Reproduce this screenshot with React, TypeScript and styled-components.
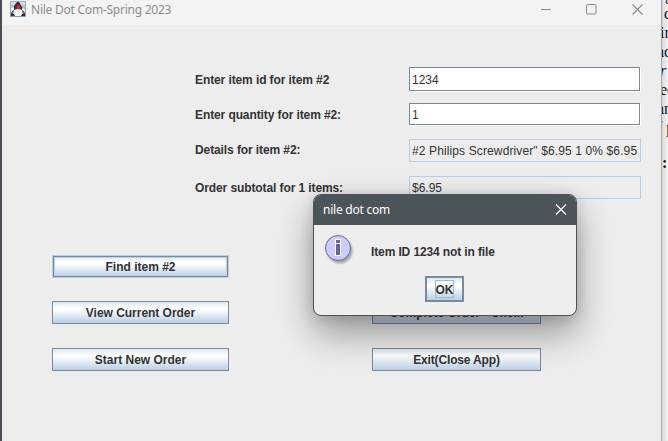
import React from "react";
import styled, { createGlobalStyle, css } from "styled-components";

const Global = createGlobalStyle`
  * { box-sizing: border-box; }
  html, body { margin: 0; overflow: hidden; }
  body { font-family: "Liberation Sans", Arial, sans-serif; font-size: 12px; color: #333; }
`;

const Desktop = styled.main`
  position: relative;
  display: flex;
  width: 668px;
  height: 441px;
  overflow: hidden;
  background: #f0f0f0;
`;
const LeftEdge = styled.div`
  width: 2px;
  background: #4a4d54;
`;
const AppWindow = styled.section`
  width: 660px;
  display: flex;
  flex-direction: column;
  background: #ededed;
  border-right: 1px solid #a9a9a9;
`;
const TitleBar = styled.header`
  height: 25px;
  display: flex;
  align-items: flex-start;
  padding: 1px 18px 0 8px;
  background: #f3f3f3;
  color: #8d8d8d;
`;
const WindowTitle = styled.h1`
  flex: 1;
  margin: 0 0 0 5px;
  font: 400 12px/17px "Noto Sans", "Open Sans", sans-serif;
  letter-spacing: -0.24px;
  white-space: nowrap;
`;
const WindowControls = styled.div`
  display: flex;
  gap: 35px;
  padding-top: 3px;
`;
const Form = styled.div`
  display: grid;
  grid-template-columns: 214px 232px;
  grid-template-rows: 36px 36px 37px 23px;
  align-items: start;
  padding: 42px 0 0 193px;
`;
const Label = styled.label<{ $line?: number }>`
  font-weight: 700;
  line-height: ${(p) => p.$line ?? 23}px;
  letter-spacing: -0.1px;
  white-space: nowrap;
`;
const fieldBase = css`
  display: flex;
  align-items: center;
  padding-left: 2px;
  white-space: nowrap;
  overflow: hidden;
`;
const Editable = styled.div<{ $height: number }>`
  ${fieldBase}
  height: ${(p) => p.$height}px;
  padding-top: 1px;
  background: #fff;
  border: 1px solid #7a8a99;
  width: 231px;
  box-shadow: 1px 1px 0 #fff;
`;
const ReadOnly = styled.div<{ $spacing?: number }>`
  ${fieldBase}
  height: 23px;
  border: 1px solid #b8cfe5;
  letter-spacing: ${(p) => p.$spacing ?? 0}px;
`;
const Actions = styled.div`
  display: grid;
  grid-template-columns: 177px 169px;
  grid-template-rows: 46px 47px 23px;
  column-gap: 143px;
  padding: 56px 0 0 50px;
`;
const MetalButton = styled.button<{ $default?: boolean; $column?: number; $spacing?: number }>`
  grid-column: ${(p) => p.$column ?? 1};
  height: 23px;
  padding: 0;
  border: 1px solid #7a8a99;
  background: linear-gradient(#dde8f3 0%, #fff 30%, #fff 35%, #b8cfe5 100%);
  color: #333;
  font: 700 12px/14px "Liberation Sans", Arial, sans-serif;
  letter-spacing: ${(p) => p.$spacing ?? 0}px;
  overflow: hidden;
  white-space: nowrap;
  ${(p) =>
    p.$default &&
    css`
      border-color: #b8cfe5;
      box-shadow: inset 0 0 0 1px #7a8a99, inset 0 0 0 2px #b8cfe5;
    `}
`;
const Dialog = styled.section`
  position: absolute;
  left: 313px;
  top: 194px;
  width: 264px;
  height: 122px;
  border: 1px solid #4b5459;
  border-radius: 8px;
  overflow: hidden;
  background: #eee;
  box-shadow: 0 18px 36px rgba(0, 0, 0, 0.36), 0 1px 14px rgba(0, 0, 0, 0.14);
`;
const DialogBar = styled.header`
  display: flex;
  justify-content: space-between;
  height: 30px;
  padding: 0 9px;
  background: #4b5459;
  color: #fff;
`;
const DialogTitle = styled.h2`
  margin: 0;
  font: 400 12px/30px "Noto Sans", "Open Sans", sans-serif;
  letter-spacing: -0.24px;
`;
const DialogMessage = styled.div`
  display: flex;
  height: 51px;
  padding: 9px 0 0 10px;
`;
const Message = styled.p`
  margin: 11px 0 0 16px;
  font-weight: 700;
  line-height: 14px;
  letter-spacing: -0.12px;
`;
const DialogFooter = styled.footer`
  display: flex;
  padding-left: 111px;
`;
const OkButton = styled(MetalButton)`
  display: flex;
  align-items: center;
  justify-content: center;
  width: 39px;
  height: 26px;
  border-width: 2px;
`;
const FocusRing = styled.span`
  width: 19px;
  height: 18px;
  padding-top: 1px;
  border: 1px solid #a3b8cc;
  display: flex;
  align-items: center;
  justify-content: center;
`;
const DocumentStrip = styled.aside`
  width: 6px;
  overflow: hidden;
  background: #f1f1f1;
  box-shadow: inset 5px 0 5px -3px rgba(0, 0, 0, 0.12);
  color: #111;
  font: 16px/19px "Liberation Serif", "Times New Roman", serif;
`;
const DocumentLine = styled.div<{ $x: number; $bold?: boolean; $italic?: boolean }>`
  height: 19px;
  text-indent: ${(p) => p.$x}px;
  font-weight: ${(p) => (p.$bold ? 700 : 400)};
  font-style: ${(p) => (p.$italic ? "italic" : "normal")};
  white-space: pre;
`;
const DocumentText = styled.div`
  margin-top: -15px;
`;
const ParagraphGap = styled.div`
  height: 16px;
`;

const documentLines = [
  { text: "ag", x: -4 },
  { text: "o", x: 2 },
  { text: "in", x: -2 },
  { text: "ac", x: -5 },
  { text: "r", x: -2, italic: true },
  { text: "ec", x: -2 },
  { text: "an", x: -5 },
  { text: "f p", x: -5 },
];

const JavaIcon = () => (
  <svg width="16" height="16" viewBox="0 0 16 16">
    <defs>
      <linearGradient id="sky" x2="0" y2="1">
        <stop stopColor="#dce6ee" />
        <stop offset="1" stopColor="#5f83a5" />
      </linearGradient>
    </defs>
    <path fill="url(#sky)" stroke="#7d97b0" strokeWidth=".8" d="M.4.4h15.2v15.2H.4z" />
    <path fill="#303238" d="M7 1h2l3 5 2 4-1 3H3l-1-3 2-5Z" />
    <path fill="#f4f4f4" d="M4 9q4-2 8 0l1 4-2 2H5l-2-2ZM1 7l3-1v3l-3 2Zm11 0 3 1v3l-3-2Z" />
    <path fill="#303238" d="m1 12 3 1 1 2H1Zm14 0-3 1-1 2h4Z" />
    <circle cx="8.5" cy="6" r="2" fill="#ed1c24" />
  </svg>
);

const CloseIcon = ({ size, color }: { size: number; color: string }) => (
  <svg width={size} height={size} viewBox="0 0 11 11" fill="none" stroke={color} strokeWidth="1.1">
    <path d="m.5.5 10 10m0-10-10 10" />
  </svg>
);

const InfoIcon = () => (
  <svg width="31" height="32" viewBox="0 0 31 32">
    <defs>
      <filter id="blur" x="-20%" y="-20%" width="140%" height="140%">
        <feGaussianBlur stdDeviation="1.3" />
      </filter>
    </defs>
    <circle cx="16" cy="17" r="12.5" fill="#777" opacity=".6" filter="url(#blur)" />
    <circle cx="14" cy="14" r="12.5" fill="#ccccff" stroke="#666699" />
    <path fill="#fff" d="M11 5h6v17h-6z" />
    <path fill="#666699" d="M12 6h4v3h-4zm0 4h4v11h-4z" />
  </svg>
);

export default function App() {
  return (
    <>
      <Global />
      <Desktop>
        <LeftEdge />
        <AppWindow>
          <TitleBar>
            <JavaIcon />
            <WindowTitle>Nile Dot Com-Spring 2023</WindowTitle>
            <WindowControls>
              <svg width="10" height="11" stroke="#8b8b8b"><path d="M0 5.5h10" /></svg>
              <svg width="11" height="11" fill="none" stroke="#8b8b8b"><rect x=".5" y=".5" width="9.5" height="9.5" rx="1" /></svg>
              <CloseIcon size={11} color="#8b8b8b" />
            </WindowControls>
          </TitleBar>
          <Form>
            <Label $line={27}>Enter item id for item #2</Label>
            <Editable $height={24}>1234</Editable>
            <Label $line={25}>Enter quantity for item #2:</Label>
            <Editable $height={22}>1</Editable>
            <Label>Details for item #2:</Label>
            <ReadOnly $spacing={0.12}>#2 Philips Screwdriver" $6.95 1 0% $6.95</ReadOnly>
            <Label $line={25}>Order subtotal for 1 items:</Label>
            <ReadOnly>$6.95</ReadOnly>
          </Form>
          <Actions>
            <MetalButton $default>Find item #2</MetalButton>
            <MetalButton $spacing={-0.03}>View Current Order</MetalButton>
            <MetalButton $column={2}>Complete Order - Che...</MetalButton>
            <MetalButton>Start New Order</MetalButton>
            <MetalButton $column={2} $spacing={-0.15}>Exit(Close App)</MetalButton>
          </Actions>
        </AppWindow>
        <DocumentStrip>
          <DocumentText>
            {documentLines.map((line, i) => (
              <DocumentLine key={i} $x={line.x} $italic={line.italic}>{line.text}</DocumentLine>
            ))}
            <ParagraphGap />
            <DocumentLine $x={0} $bold>:</DocumentLine>
          </DocumentText>
        </DocumentStrip>
        <Dialog role="dialog">
          <DialogBar>
            <DialogTitle>nile dot com</DialogTitle>
            <svg width="12" height="30" stroke="#fff" strokeWidth="1.1"><path d="m1 9.5 10 10m0-10-10 10" /></svg>
          </DialogBar>
          <DialogMessage>
            <InfoIcon />
            <Message>Item ID 1234 not in file</Message>
          </DialogMessage>
          <DialogFooter>
            <OkButton><FocusRing>OK</FocusRing></OkButton>
          </DialogFooter>
        </Dialog>
      </Desktop>
    </>
  );
}
